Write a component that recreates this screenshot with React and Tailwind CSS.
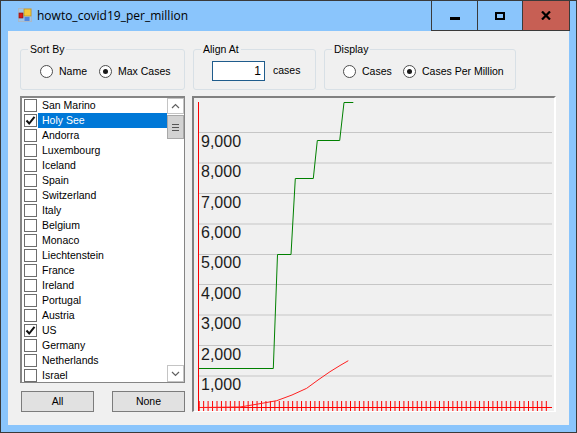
const countries = [
  ["San Marino", false], ["Holy See", true], ["Andorra", false], ["Luxembourg", false], ["Iceland", false],
  ["Spain", false], ["Switzerland", false], ["Italy", false], ["Belgium", false], ["Monaco", false],
  ["Liechtenstein", false], ["France", false], ["Ireland", false], ["Portugal", false], ["Austria", false],
  ["US", true], ["Germany", false], ["Netherlands", false], ["Israel", false],
];

function Radio({ checked, label, labelClass }) {
  return (
    <div className="flex items-center">
      <span className="flex h-[13px] w-[13px] items-center justify-center rounded-full border border-[#4d4d4d] bg-white">
        {checked && <span className="h-[5px] w-[5px] rounded-full bg-[#1a1a1a]" />}
      </span>
      <span className={labelClass}>{label}</span>
    </div>
  );
}

function Group({ title, className, children }) {
  return (
    <div className={"relative box-border h-[41px] rounded-[3px] border border-[#d8e0e6] " + className}>
      <span className="absolute left-[7px] top-[-7px] bg-[#f0f0f0] px-[2px] leading-[13px]">{title}</span>
      {children}
    </div>
  );
}

function Row({ name, checked, selected }) {
  return (
    <div className="flex h-[15px] shrink-0 items-center pl-px">
      <span className="flex h-[13px] w-[13px] shrink-0 items-center justify-center border border-[#6e6e6e] bg-white">
        {checked && (
          <svg width="11" height="11" viewBox="0 0 11 11">
            <path d="M1.5 5.5 L4.2 8.5 L9.5 1.8" fill="none" stroke="#111" strokeWidth="2" />
          </svg>
        )}
      </span>
      <span className={"ml-px flex h-[15px] flex-1 items-center pl-[4px] " + (selected ? "bg-[#0078d7] text-white" : "")}>{name}</span>
    </div>
  );
}

function Chart() {
  const grid = [132.5, 163, 193.5, 224, 254.5, 284.5, 315, 345.5, 376];
  const labels = [
    ["9,000", 146.5], ["8,000", 177], ["7,000", 207.5], ["6,000", 237.5], ["5,000", 268],
    ["4,000", 298.5], ["3,000", 329], ["2,000", 359.5], ["1,000", 390],
  ];
  const ticks = Array.from({ length: 79 }, (_, i) => 199.2 + i * 4.45);
  return (
    <svg width="360" height="313" viewBox="194 98 360 313" className="block">
      {grid.map((y) => (
        <line key={y} x1="198" x2="552" y1={y} y2={y} stroke="#c6c6c6" strokeWidth="1.2" />
      ))}
      {labels.map(([t, y]) => (
        <text key={t} x="201" y={y} fontSize="16" fill="#1c1c1c" fontFamily="'Liberation Sans', sans-serif">{t}</text>
      ))}
      {ticks.map((x) => (
        <line key={x} x1={x} x2={x} y1="401" y2="411" stroke="#ff0000" strokeWidth="1" />
      ))}
      <line x1="198" x2="552" y1="407.5" y2="407.5" stroke="#ff0000" strokeWidth="1" />
      <line x1="198.5" x2="198.5" y1="102" y2="411" stroke="#ff0000" strokeWidth="1" />
      <polyline
        points="199,368.5 273.3,368.5 277.5,254.5 291,254.5 295.3,178.5 313.3,178.5 317.3,140.5 339.7,140.5 344,102.5 353.3,102.5"
        fill="none" stroke="#008000" strokeWidth="1"
      />
      <polyline
        points="199,407.5 240,407 258,404 276.7,400.7 292,395 306.7,388.3 318,380 330,371.7 340,365.5 348.3,360.7"
        fill="none" stroke="#ff2020" strokeWidth="1"
      />
    </svg>
  );
}

export default function App() {
  return (
    <div className="box-border flex h-[433px] w-[577px] flex-col border border-[#3a3a3a] bg-[#8ac5fc] font-['Liberation_Sans',sans-serif] text-[10.5px] text-black">
      {/* Title bar */}
      <div className="flex h-[29px] shrink-0 items-start pl-[17px]">
        <svg width="14" height="14" viewBox="0 0 14 14" className="mt-[7px] shrink-0">
          <rect x="0" y="0" width="14" height="14" fill="#a9b8c8" />
          <rect x="1" y="1" width="12" height="12" fill="#9fc4e6" />
          <rect x="1" y="5" width="4" height="5" fill="#d81c1c" stroke="#7a1010" strokeWidth="0.6" />
          <rect x="6" y="1" width="7" height="7" fill="#f5c93c" stroke="#a88a1c" strokeWidth="0.6" />
          <rect x="6.5" y="9" width="5" height="4" fill="#4f86e0" />
        </svg>
        <span className="ml-[5px] mt-[6px] font-['Open_Sans',sans-serif] text-[12px] leading-[17px]">howto_covid19_per_million</span>
        <div className="ml-auto mr-[6px] flex h-[30px] items-stretch border border-t-0 border-[#3a3a3a]">
          <div className="flex w-[46px] items-center justify-center border-r border-[#3a3a3a]">
            <span className="mt-[5px] h-[3px] w-[10px] bg-black" />
          </div>
          <div className="flex w-[45px] items-center justify-center border-r border-[#3a3a3a]">
            <span className="h-[8px] w-[10px] border-2 border-black" />
          </div>
          <div className="flex w-[46px] items-center justify-center bg-[#c75f54]">
            <svg width="10" height="9" viewBox="0 0 10 9">
              <path d="M1 0.5 L9 8.5 M9 0.5 L1 8.5" stroke="#000" strokeWidth="2.2" fill="none" />
            </svg>
          </div>
        </div>
      </div>

      {/* Client area */}
      <div className="mx-[7px] mt-px flex h-[394px] w-[561px] flex-col border-t border-[#f0f0f0] bg-[#f0f0f0] pl-[12px] pt-[17px]">
        <div className="flex gap-[8px]">
          <Group title="Sort By" className="w-[165px]">
            <div className="flex items-center pl-[19px] pt-[14px]">
              <Radio label="Name" labelClass="ml-[6px] w-[40px]" />
              <Radio checked label="Max Cases" labelClass="ml-[6px]" />
            </div>
          </Group>
          <Group title="Align At" className="w-[123px]">
            <div className="flex items-center pl-[18px] pt-[11px]">
              <div className="box-border flex h-[20px] w-[53px] items-center justify-end border border-[#1f5c8c] bg-white pr-[3px] text-[12px]">1</div>
              <span className="ml-[8px]">cases</span>
            </div>
          </Group>
          <Group title="Display" className="w-[192px]">
            <div className="flex items-center pl-[18px] pt-[14px]">
              <Radio label="Cases" labelClass="ml-[6px] w-[41px]" />
              <Radio checked label="Cases Per Million" labelClass="ml-[6px]" />
            </div>
          </Group>
        </div>

        <div className="mt-[6px] flex gap-[7px]">
          <div className="flex w-[165px] flex-col gap-[8px]">
            <div className="box-border flex h-[287px] overflow-hidden border-b border-l-2 border-r border-t-2 border-[#858585] bg-white">
              <div className="flex min-w-0 flex-1 flex-col pl-px">
                {countries.map(([n, c]) => (
                  <Row key={n} name={n} checked={c} selected={n === "Holy See"} />
                ))}
              </div>
              <div className="flex w-[17px] shrink-0 flex-col">
                <div className="box-border flex h-[16px] items-center justify-center border border-[#c4c4c4]">
                  <svg width="9" height="6" viewBox="0 0 9 6"><path d="M1 5 L4.5 1.5 L8 5" fill="none" stroke="#606060" strokeWidth="1.2" /></svg>
                </div>
                <div className="mt-px box-border flex h-[24px] flex-col items-center justify-center gap-[2px] border border-[#a8a8a8] bg-[#d2d2d2]">
                  <span className="h-px w-[7px] bg-[#555]" />
                  <span className="h-px w-[7px] bg-[#555]" />
                  <span className="h-px w-[7px] bg-[#555]" />
                </div>
                <div className="mt-auto box-border flex h-[17px] items-center justify-center border border-[#c4c4c4]">
                  <svg width="9" height="6" viewBox="0 0 9 6"><path d="M1 1 L4.5 4.5 L8 1" fill="none" stroke="#606060" strokeWidth="1.2" /></svg>
                </div>
              </div>
            </div>
            <div className="ml-px flex justify-between">
              <div className="box-border flex h-[21px] w-[73px] items-center justify-center border border-[#7c7c7c] bg-[#e1e1e1]">All</div>
              <div className="box-border flex h-[21px] w-[73px] items-center justify-center border border-[#7c7c7c] bg-[#e1e1e1]">None</div>
            </div>
          </div>
          <div className="box-border h-[316px] w-[364px] border-2 border-b-[1px] border-b-white border-l-[#808080] border-r-white border-t-[#808080] bg-[#f0f0f0]">
            <Chart />
          </div>
        </div>
      </div>
    </div>
  );
}
